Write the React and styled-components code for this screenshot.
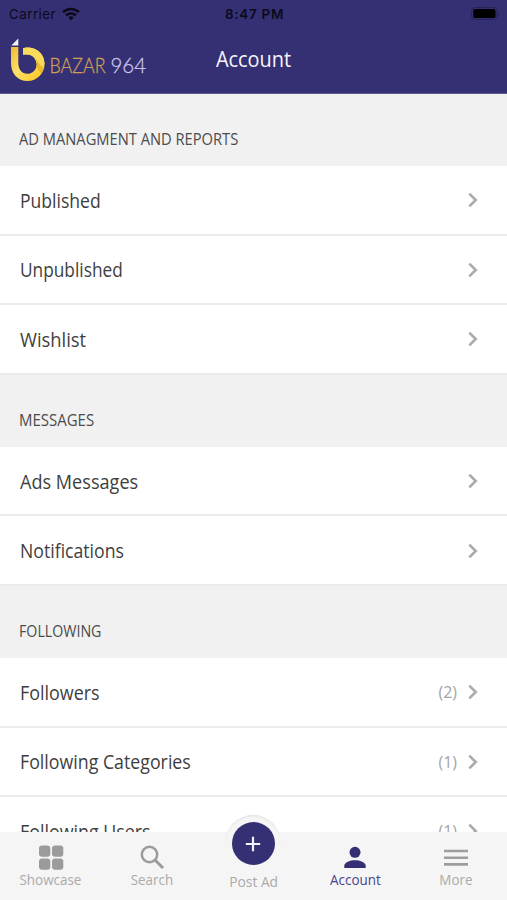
import React from "react";
import styled, { createGlobalStyle } from "styled-components";

const GlobalStyle = createGlobalStyle`
  *, *::before, *::after { box-sizing: border-box; }
  html, body { margin: 0; padding: 0; }
  body { font-family: "Open Sans", "Noto Sans", sans-serif; background: #fff; }
`;

const Screen = styled.div`
  display: flex;
  flex-direction: column;
  width: 507px;
  height: 900px;
  overflow: hidden;
  background: #fff;
`;

const Header = styled.header`
  flex: none;
  height: 94px;
  background: #353073;
  border-bottom: 1px solid #5d598e;
`;

const StatusBar = styled.div`
  display: grid;
  grid-template-columns: 1fr auto 1fr;
  align-items: center;
  height: 27px;
  padding: 0 7px 0 9px;
  font-family: Inter, "Liberation Sans", sans-serif;
  font-size: 13px;
  color: #0b0a1c;
`;

const Carrier = styled.div`
  display: flex;
  align-items: center;
  gap: 6px;
  font-size: 13.3px;
  letter-spacing: 0.5px;
`;

const Clock = styled.div`
  font-weight: 600;
  font-size: 13.5px;
  letter-spacing: 0.7px;
`;

const BatteryIcon = styled.svg`
  justify-self: end;
`;

const TitleBar = styled.div`
  display: grid;
  grid-template-columns: 1fr auto 1fr;
  align-items: center;
  height: 66px;
`;

const Title = styled.h1`
  margin: -4px 0 0;
  font-size: 22px;
  font-weight: 400;
  color: #f6f5fb;
  transform: scaleX(0.905);
`;

const LogoSvg = styled.svg`
  display: block;
  font-family: Lato, sans-serif;
  font-weight: 300;
  font-size: 21px;
`;

const List = styled.main`
  flex: 1;
  min-height: 0;
  overflow: hidden;
`;

const SectionTitle = styled.h2`
  height: 72px;
  margin: 0;
  padding: 35px 19px 0;
  background: #f1f1f1;
  color: #4c4c4c;
  font-size: 15.5px;
  line-height: 20px;
  font-weight: 400;
`;

const Narrow = styled.span`
  display: inline-block;
  white-space: nowrap;
  transform: scaleX(${(p) => p.$scale});
  transform-origin: left center;
`;

const Row = styled.div`
  display: flex;
  align-items: center;
  height: 69.6px;
  padding: 1px 27px 0 20px;
  border-bottom: 2px solid #ebebeb;
  background: #fff;
`;

const RowLabel = styled.span`
  flex: 1;
  padding-top: 1px;
  color: #3e3e3e;
  font-size: 19.5px;
  line-height: 24px;
`;

const Count = styled.span`
  margin-right: 9px;
  color: #a5a5a5;
  font-size: 16px;
`;

const TabBar = styled.nav`
  flex: none;
  display: grid;
  grid-template-columns: repeat(5, 1fr);
  height: 68px;
  background: #f5f5f5;
`;

const Tab = styled.div`
  position: relative;
  display: flex;
  flex-direction: column;
  align-items: center;
  padding-top: 11px;
`;

const TabLabel = styled.span`
  margin-top: ${(p) => p.$top ?? 0}px;
  font-size: 14.5px;
  line-height: 18px;
  transform: scaleX(${(p) => p.$scale ?? 0.925});
  white-space: nowrap;
  color: ${(p) => (p.$active ? "#49448a" : "#aaa")};
`;

const PostButton = styled.div`
  position: absolute;
  top: -17px;
  left: 50%;
  width: 56px;
  height: 56px;
  margin-left: -28px;
  display: flex;
  align-items: center;
  justify-content: center;
  border-radius: 50%;
  background: #f5f5f5;
  box-shadow: inset 0 2px 2px -1px #dededc;
`;

const PostDisc = styled.div`
  display: flex;
  align-items: center;
  justify-content: center;
  width: 43px;
  height: 43px;
  margin-top: 1px;
  border-radius: 50%;
  background: #353073;
`;

function Logo() {
  return (
    <LogoSvg width="150" height="54" viewBox="0 33 150 54">
      <defs>
        <linearGradient id="gold" x1="0" y1="0" x2="1" y2="1">
          <stop offset="0" stopColor="#efb92c" />
          <stop offset="0.45" stopColor="#ffe06b" />
          <stop offset="1" stopColor="#f9c414" />
        </linearGradient>
      </defs>
      <path d="M11.3 45.5 18.3 38.600v6.900z" fill="#f0effa" />
      <path
        fillRule="evenodd"
        d="M11 47h7.3v15.500c0 7 3.500 11.300 9 11.300 5.400 0 9.300-4.200 9.300-9.600 0-5.600-4-9.700-9.500-9.700L23 54.500V48.300c1-.5 2.600-.8 4.200-.8C37 47.500 44.600 54.800 44.600 64S37 81 27.600 81C17.500 81 11 73.500 11 63z"
        fill="url(#gold)"
      />
      <path d="M23 48.300c8-2.500 17.500 1.500 20.500 9.700l1 6-4 4-4.200-5.500c-.8-5-4.700-8-9.200-8L23 54.500z" fill="#fbdc5a" />
      <path d="M34.500 57.500 43.800 69l-2.600 4.500-4.800-6.500c.8-3.500.2-7-1.900-9.500z" fill="#e3ae22" opacity="0.7" />
      <text x="49.500" y="73" fill="#cfa052" stroke="#cfa052" strokeWidth="0.3" textLength="56" lengthAdjust="spacingAndGlyphs">BAZAR</text>
      <text x="110.500" y="73" fill="#c9c5ea" stroke="#c9c5ea" strokeWidth="0.3" textLength="35.500" lengthAdjust="spacingAndGlyphs">964</text>
    </LogoSvg>
  );
}

function WifiIcon() {
  return (
    <svg width="18" height="14" viewBox="0 0 18 14" fill="none" stroke="#0b0a1c" strokeWidth="2.500">
      <path d="M1 5.200a11.500 11.500 0 0 1 16 0" />
      <path d="M4 8.400a7.200 7.200 0 0 1 10 0" />
      <path d="M6.300 10.600a3.900 3.900 0 0 1 5.400 0L9 13.300z" fill="#0b0a1c" stroke="none" />
    </svg>
  );
}

function Battery() {
  return (
    <BatteryIcon width="31" height="14" viewBox="0 0 31 14">
      <rect x="2.500" y="0.500" width="25.500" height="12" rx="3.500" fill="none" stroke="#272259" />
      <rect x="4.200" y="2" width="22.300" height="9" rx="1.800" fill="#000" />
      <path d="M29.300 4.500v4.200c1.600-.6 1.600-3.600 0-4.200z" fill="#272259" />
    </BatteryIcon>
  );
}

function Chevron() {
  return (
    <svg width="14" height="16" viewBox="0 0 14 16" fill="none" stroke="#acacac" strokeWidth="2.700">
      <path d="M3.300 1.600 9.700 8l-6.400 6.400" />
    </svg>
  );
}

function ShowcaseIcon() {
  return (
    <svg width="26" height="28" viewBox="0 0 26 28" fill="#9b9b9b">
      <rect x="1" y="2.500" width="11.300" height="11.300" rx="3" />
      <rect x="14" y="2.500" width="11.300" height="11.300" rx="3" />
      <rect x="1" y="15.500" width="11.300" height="11.300" rx="3" />
      <rect x="14" y="15.500" width="11.300" height="11.300" rx="3" />
    </svg>
  );
}

function SearchIcon() {
  return (
    <svg width="26" height="28" viewBox="0 0 26 28" fill="none" stroke="#9b9b9b">
      <circle cx="10.500" cy="11.500" r="7.700" strokeWidth="2.500" />
      <path d="m16 17 8 8" strokeWidth="3" />
    </svg>
  );
}

function PersonIcon() {
  return (
    <svg width="26" height="28" viewBox="0 0 26 28" fill="#353073">
      <circle cx="13" cy="9.300" r="5.500" />
      <path d="M2.300 25v-2.200c0-3.700 6-5.600 10.700-5.600s10.700 1.900 10.700 5.600V25z" />
    </svg>
  );
}

function MoreIcon() {
  return (
    <svg width="26" height="28" viewBox="0 0 26 28" stroke="#9d9d9d" strokeWidth="2.600">
      <path d="M1 8h24M1 14.700h24M1 21.400h24" />
    </svg>
  );
}

function PlusIcon() {
  return (
    <svg width="16" height="16" viewBox="0 0 16 16" stroke="#f4f3fb" strokeWidth="2.200">
      <path d="M.8 8h14.400M8 .8v14.400" />
    </svg>
  );
}

const sections = [
  {
    title: "AD MANAGMENT AND REPORTS",
    scale: 0.948,
    rows: [
      { label: "Published", scale: 0.9 },
      { label: "Unpublished", scale: 0.886 },
      { label: "Wishlist", scale: 0.94 },
    ],
  },
  {
    title: "MESSAGES",
    scale: 0.967,
    rows: [
      { label: "Ads Messages", scale: 0.928 },
      { label: "Notifications", scale: 0.905 },
    ],
  },
  {
    title: "FOLLOWING",
    scale: 0.917,
    rows: [
      { label: "Followers", scale: 0.918, count: 2 },
      { label: "Following Categories", scale: 0.911, count: 1 },
      { label: "Following Users", scale: 0.915, count: 1 },
    ],
  },
];

export default function App() {
  return (
    <Screen>
      <GlobalStyle />
      <Header>
        <StatusBar>
          <Carrier>
            Carrier
            <WifiIcon />
          </Carrier>
          <Clock>8:47 PM</Clock>
          <Battery />
        </StatusBar>
        <TitleBar>
          <Logo />
          <Title>Account</Title>
        </TitleBar>
      </Header>
      <List>
        {sections.map((s) => (
          <section key={s.title}>
            <SectionTitle>
              <Narrow $scale={s.scale}>{s.title}</Narrow>
            </SectionTitle>
            {s.rows.map((r) => (
              <Row key={r.label}>
                <RowLabel>
                  <Narrow $scale={r.scale}>{r.label}</Narrow>
                </RowLabel>
                {r.count && <Count>({r.count})</Count>}
                <Chevron />
              </Row>
            ))}
          </section>
        ))}
      </List>
      <TabBar>
        <Tab>
          <ShowcaseIcon />
          <TabLabel>Showcase</TabLabel>
        </Tab>
        <Tab>
          <SearchIcon />
          <TabLabel>Search</TabLabel>
        </Tab>
        <Tab>
          <PostButton>
            <PostDisc>
              <PlusIcon />
            </PostDisc>
          </PostButton>
          <TabLabel $top={30} $scale={0.95}>Post Ad</TabLabel>
        </Tab>
        <Tab>
          <PersonIcon />
          <TabLabel $active>Account</TabLabel>
        </Tab>
        <Tab>
          <MoreIcon />
          <TabLabel>More</TabLabel>
        </Tab>
      </TabBar>
    </Screen>
  );
}
